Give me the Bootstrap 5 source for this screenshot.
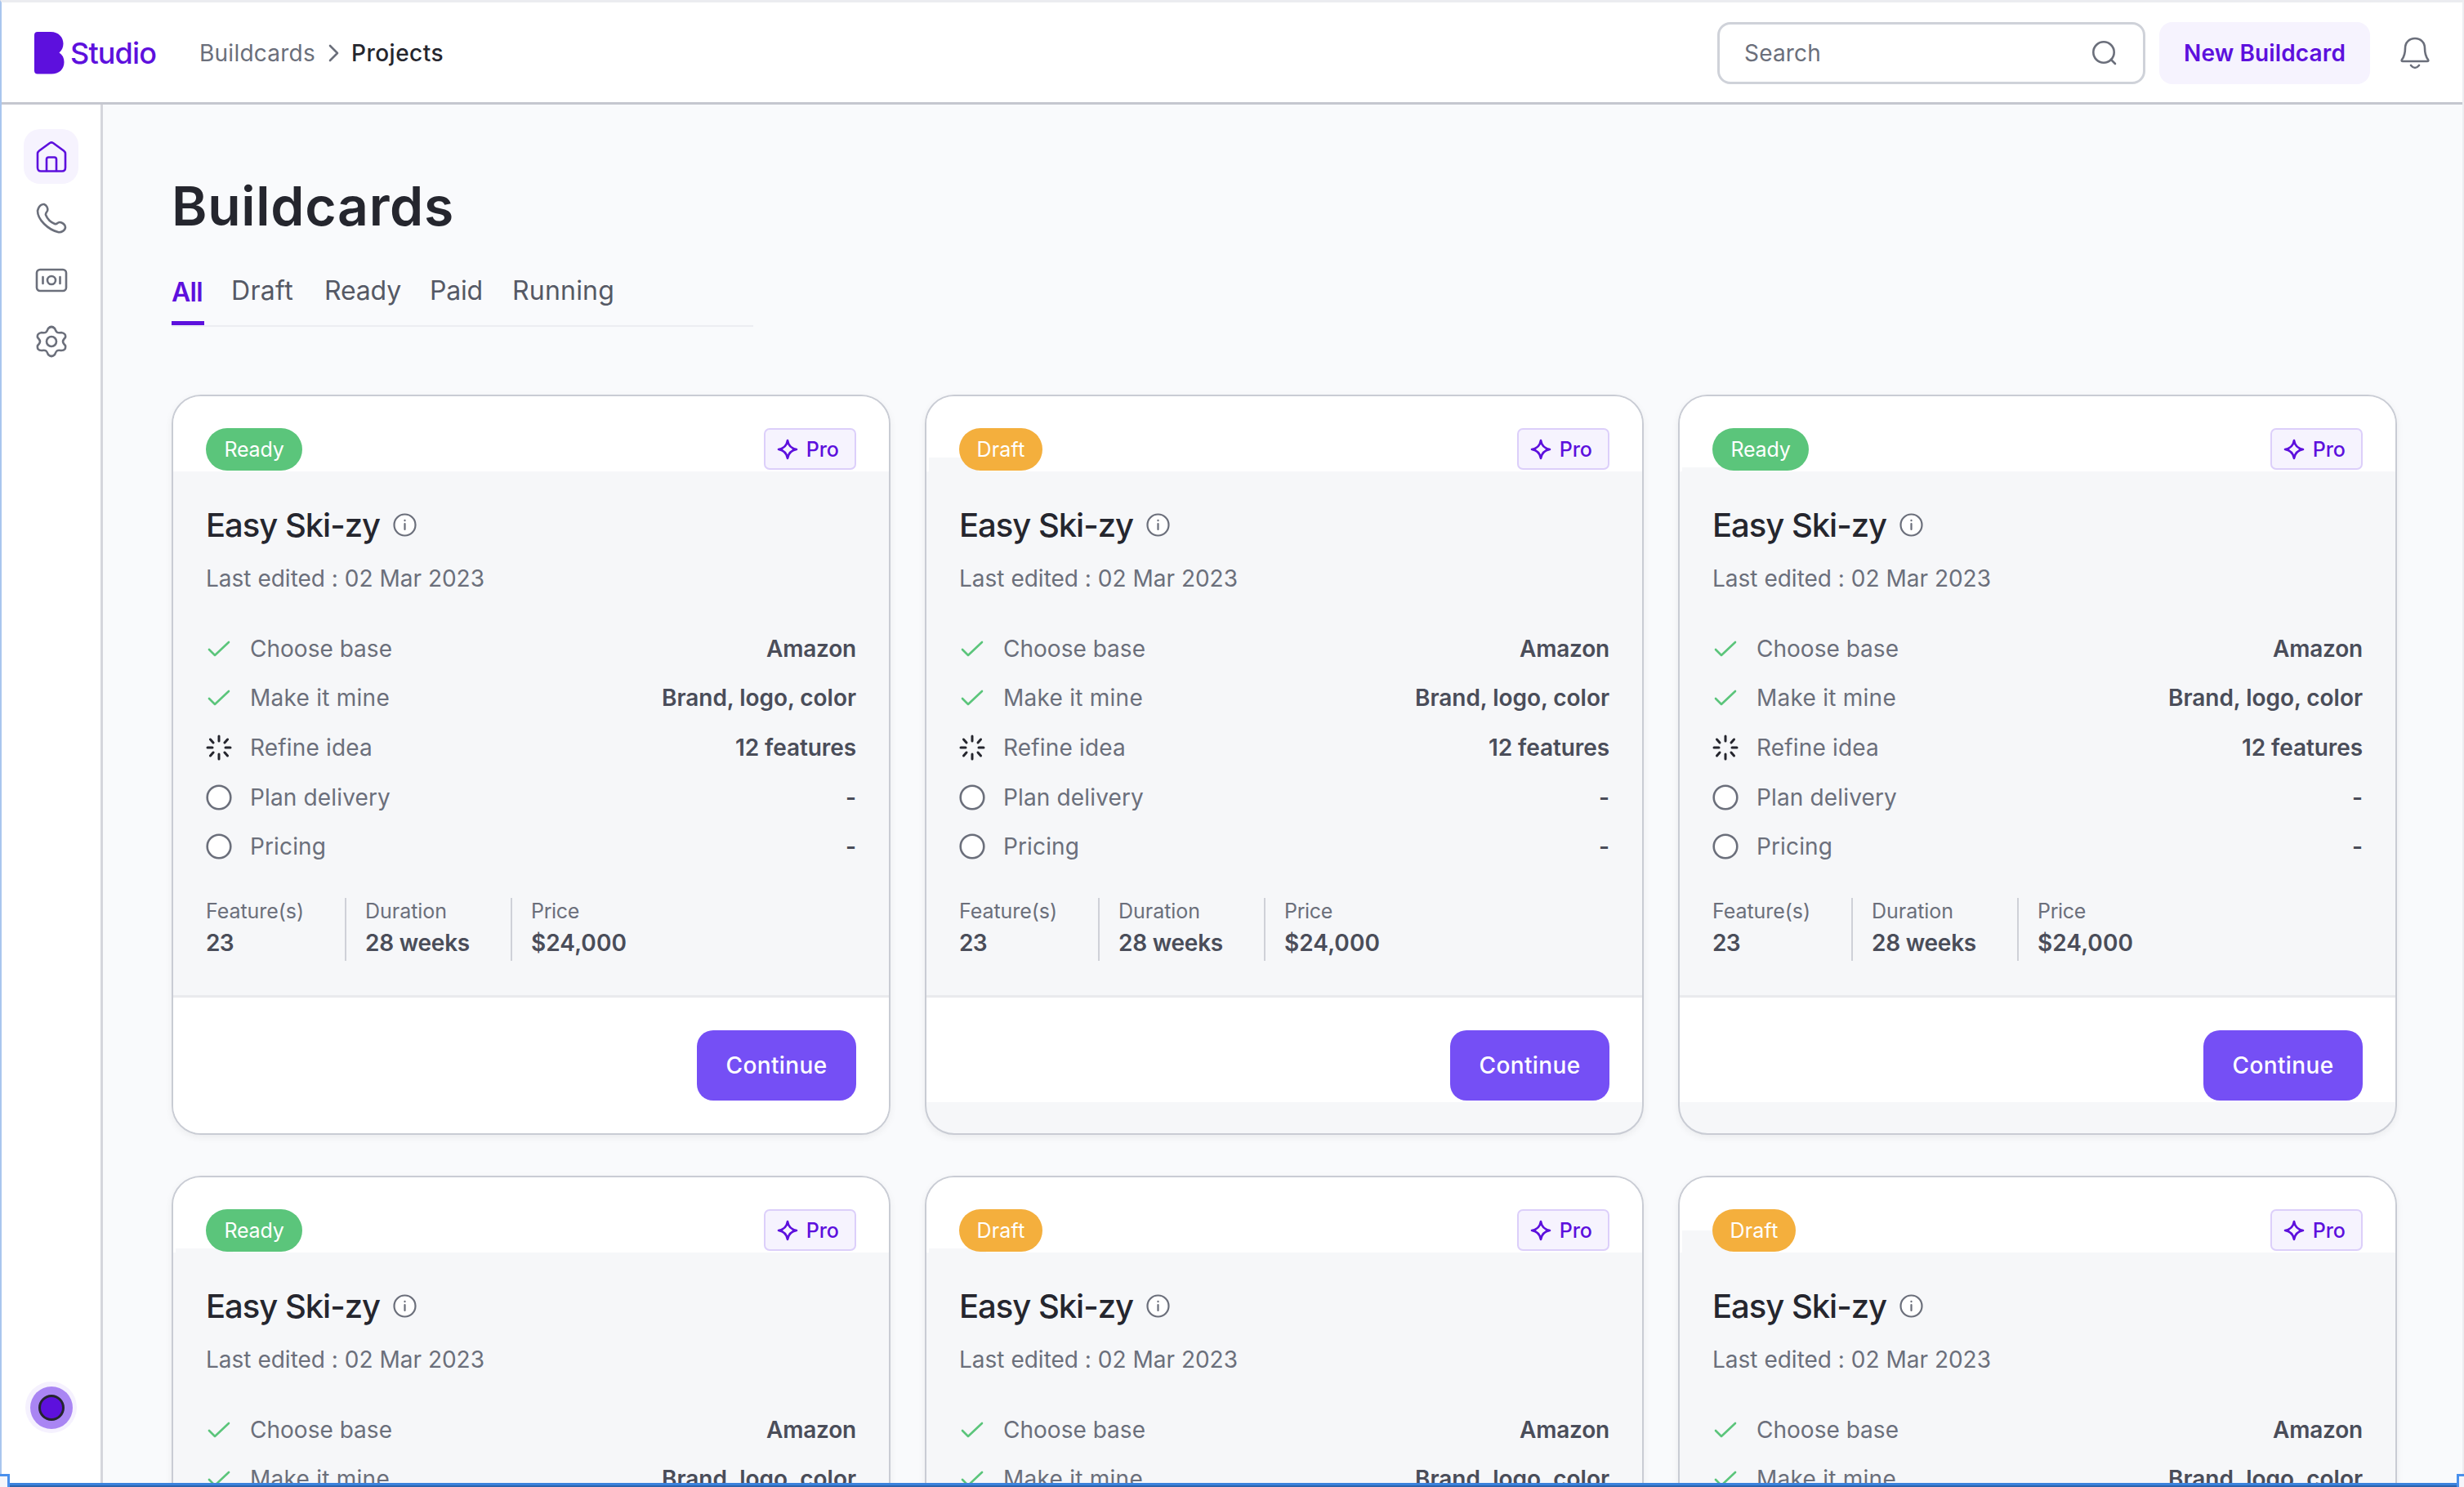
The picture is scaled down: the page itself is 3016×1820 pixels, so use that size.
<!DOCTYPE html>
<html lang="en">
<head>
<meta charset="utf-8">
<title>Buildcards</title>
<link rel="stylesheet" href="https://cdn.jsdelivr.net/npm/bootstrap@5.3.0/dist/css/bootstrap.min.css">
<style>
html,body{height:100%}
body{font-family:Inter,"Liberation Sans",sans-serif;font-size:28px;line-height:36px;color:#6b6f7b;background:#f9fafc;overflow:hidden}
svg{display:block;flex:none;fill:none;stroke:currentColor;stroke-width:2.6;stroke-linecap:round;stroke-linejoin:round}
.shell{height:1815px;border-left:2px solid #a9c6ee;border-right:2px solid #ededf1;border-top:3px solid #ebecf0;overflow:hidden}
.topbar{height:125px;border-bottom:3px solid #c5c7cf;background:#fff;padding:2px 40px 0 40px}
.logo-text{font-size:36px;color:#5d10dd;font-weight:500}
.crumb{margin-left:53px;gap:15.5px}
.searchbox{width:524px;height:76px;border:3px solid #cfd2d9;border-radius:16px;padding:0 31px 0 30px}
.newbtn{width:258px;height:76px;border-radius:16px;background:#f6f3fe;color:#5d10dd;font-weight:600;margin-left:17px}
.side{width:124px;border-right:3px solid #d5d6dc;background:#fff;padding:30px 0 61px}
.navtile{width:67px;height:67px;border-radius:20px;margin-bottom:8.5px}
.navtile.on{background:#f6f3fe;color:#5d10dd}
.avatar-ring{width:63px;height:63px;border-radius:50%;background:#f5f1fe}
.avatar-mid{width:52px;height:52px;border-radius:50%;background:#a985f3}
.avatar-dot{width:32px;height:32px;border-radius:50%;background:#5d10dd;border:3px solid #25262e}
.main-area{padding:84px 0 0 84px;color:#6b6f7b;overflow:hidden}
.main-area h1{font-size:66px;line-height:80px;font-weight:600;color:#25262e;margin:0}
.tabline{width:712px;height:64px;border-bottom:2px solid #ecedf1;margin-top:44px;font-size:32px;line-height:40px;color:#555965}
.tabline .on{color:#5d10dd;font-weight:600;height:62px;border-bottom:5px solid #5d10dd;padding-top:2px;width:40px}
.cards{display:grid;grid-template-columns:repeat(3,880px);gap:50px 42px;margin-top:83px}
.bcard{height:906px;border:2px solid #c9ccd4;border-radius:36px;background:#f6f7f9;box-shadow:0 3px 10px #0000000f;overflow:hidden}
.chead{height:92px;background:#fff;padding:39px 40px 0}
.notch-27{background:linear-gradient(#f6f7f9,#f6f7f9) 3px 100%/60px 27px no-repeat #fff}
.notch-17{background:linear-gradient(#f6f7f9,#f6f7f9) 3px 100%/60px 17px no-repeat #fff}
.notch-5{background:linear-gradient(#f6f7f9,#f6f7f9) 3px 100%/70px 5px no-repeat #fff}
.pill{height:52px;border-radius:26px;color:#fff;font-size:25px;background:#5bc57b}
.pill.draft{background:#f4af3d}
.protag{height:51px;width:113px;border:2px solid #dccffa;border-radius:7px;background:#f6f3fe;color:#5d10dd;font-size:25px;font-weight:500;gap:9.5px;padding-right:5px}
.cbody{height:644px;border-bottom:3px solid #e9eaed;padding:41.5px 40px 0}
.cname{font-size:40px;line-height:48px;font-weight:550;color:#25262e;gap:15.5px}
.edited{margin-top:23px;margin-bottom:50px}
.step{height:36px;margin-bottom:24.7px}
.step svg{margin-right:22px}
.step b,.stat b{font-weight:600;color:#4a4d59}
.stats{margin-top:45px}
.stat{height:77px;border-left:2px solid #cfd1d8;padding-left:23px;padding-top:1px}
.stat:first-child{border:0;padding-left:0}
.stat small{font-size:25px;line-height:30px;display:block}
.stat b{display:block;line-height:36px;margin-top:6px}
.cfoot{padding:40px 40px 0}
.foot-full{height:171px;background:#fff}
.foot-short{height:128px;background:#fff}
.cont{width:195px;height:86px;border-radius:20px;background:#754ff5;color:#fff;font-weight:500}
.framebar{height:5px;background:#3b82dc;border-bottom:2px solid #2c64ad}
.handle{position:absolute;bottom:0;width:20px;height:16px;background:#f5f6fb;border:3px solid #4a90ec;border-bottom:0}
.handle.l{left:-8px}.handle.r{right:-11px}
</style>
<script src="https://cdn.jsdelivr.net/npm/bootstrap@5.3.0/dist/js/bootstrap.bundle.min.js"></script>
</head>
<body>
<div class="shell d-flex flex-column">
 <header class="topbar d-flex align-items-center flex-shrink-0">
  <svg width="37" height="52" viewBox="0 0 37 52"><path fill="#5d10dd" stroke="none" d="M4 0H20C30 0 35.500 7 35.500 14.500C35.500 19 33.500 23 30.500 25.500C34.500 28 36.500 32 36.500 37C36.500 46 30 51.500 21 51.500H4Q0 51.500 0 47.500V4Q0 0 4 0Z"/></svg>
  <span class="logo-text" data-w="105" style="margin-left:7px">Studio</span>
  <nav class="crumb d-flex align-items-center"><span data-w="142">Buildcards</span>
   <svg width="13" height="22" viewBox="0 0 13 22"><path d="M2 2L11 11L2 20"/></svg>
   <span data-w="113" style="color:#25262e;font-weight:500">Projects</span></nav>
  <div class="searchbox d-flex align-items-center justify-content-between ms-auto"><span data-w="94">Search</span>
   <svg width="32" height="32" viewBox="0 0 32 32"><circle cx="15" cy="15" r="12.7"/><path d="M24 24L29 29"/></svg></div>
  <button class="newbtn btn border-0 p-0" style="font-size:28px"><span data-w="198">New Buildcard</span></button>
  <svg width="36" height="40" viewBox="0 0 36 40" style="margin-left:37px"><path d="M2 28C5 24 6 20 6 14C6 7 11 2 18 2S30 7 30 14C30 20 31 24 34 28Q35 30 33 30H3Q1 30 2 28Z"/><path d="M13 35Q18 41 23 35"/></svg>
 </header>
 <div class="d-flex flex-grow-1" style="min-height:0">
  <aside class="side d-flex flex-column align-items-center flex-shrink-0">
   <div class="navtile on d-flex align-items-center justify-content-center"><svg width="38" height="38" viewBox="0 0 38 38"><path d="M2 15Q2 13 4 11.500L17 2Q19 .8 21 2L34 11.500Q36 13 36 15V32Q36 36.500 32 36.500H6Q2 36.500 2 32Z"/><path d="M13 36V22Q13 19.500 15.500 19.500H22.500Q25 19.500 25 22V36"/></svg></div>
   <div class="navtile d-flex align-items-center justify-content-center"><svg width="38" height="38" viewBox="0 0 38 38"><path d="M3 7C4 4 7 1.500 10 2C13 3 15 7 14 10C13 12 11.500 13 12 15C14 20 18 24 23 26C26 27 26 24 29 24C32 24 36 27 36 30C36 34 31 37 27 36C15 33 2 21 2 10Z"/></svg></div>
   <div class="navtile d-flex align-items-center justify-content-center"><svg width="40" height="30" viewBox="0 0 40 30"><rect x="2" y="2" width="36" height="26" rx="4"/><circle cx="20" cy="15" r="5"/><path d="M9.500 11V19M30.500 11V19"/></svg></div>
   <div class="navtile d-flex align-items-center justify-content-center"><svg width="38" height="40" viewBox="0 0 38 40"><path d="M15 4Q19 0 23 4C25 9 26 10 31 9Q37 10 36 15C32 19 32 21 36 25Q37 31 31 31C26 30 25 31 23 36Q19 40 15 36C13 31 12 30 7 31Q1 31 2 25C6 21 6 19 2 15Q1 10 7 9C12 10 13 9 15 4Z"/><circle cx="19" cy="20" r="6"/></svg></div>
   <div class="avatar-ring d-flex align-items-center justify-content-center mt-auto"><div class="avatar-mid d-flex align-items-center justify-content-center"><div class="avatar-dot"></div></div></div>
  </aside>
  <main class="main-area flex-grow-1">
   <h1><span data-w="346">Buildcards</span></h1>
   <div class="tabline d-flex"><span class="on"><span data-w="38">All</span></span><span data-w="76" style="margin-left:33px">Draft</span><span data-w="94" style="margin-left:38px">Ready</span><span data-w="65" style="margin-left:35px">Paid</span><span data-w="125" style="margin-left:36px">Running</span></div>
   <div class="cards" id="cards"></div>
  </main>
 </div>
</div>
<div class="framebar"></div><i class="handle l"></i><i class="handle r"></i>
<script>
const check='<svg width="32" height="32" viewBox="0 0 32 32" style="color:#5bc57b"><path d="M4 17L11 24L28 8"/></svg>';
const ring='<svg width="32" height="32" viewBox="0 0 32 32"><circle cx="16" cy="16" r="14.300" fill="#fff"/></svg>';
const spin='<svg width="32" height="32" viewBox="0 0 32 32" style="color:#25262e;stroke-width:3"><path d="M16 2V8M16 24V30M2 16H8M24 16H30M5.500 6L9 10M23 22L26.500 26M5.500 26L9 22M23 10L26.500 6"/></svg>';
const steps=[[check,'Choose base',174,'Amazon',110],[check,'Make it mine',171,'Brand, logo, color',238],[spin,'Refine idea',150,'12 features',148],[ring,'Plan delivery',172,'-',11],[ring,'Pricing',93,'-',11]];
const data=[['Ready','','foot-full'],['Draft','notch-17','foot-short'],['Ready','notch-5','foot-short'],['Ready','notch-5','foot-full'],['Draft','notch-5','foot-short'],['Draft','notch-27','foot-short']];
document.getElementById('cards').innerHTML=data.map(([s,n,f])=>`<article class="bcard">
<div class="chead ${n} d-flex justify-content-between align-items-start"><span class="pill ${s=='Draft'?'draft':''} d-flex align-items-center justify-content-center" style="width:${s=='Draft'?102:118}px"><span data-w="${s=='Draft'?59:73}">${s}</span></span>
<span class="protag d-flex align-items-center justify-content-center"><svg width="26" height="26" viewBox="0 0 26 26"><path d="M13 2Q14.500 11.500 24 13Q14.500 14.500 13 24Q11.500 14.500 2 13Q11.500 11.500 13 2Z"/></svg><span data-w="40">Pro</span></span></div>
<div class="cbody"><div class="cname d-flex align-items-center"><span data-w="213">Easy Ski-zy</span><svg width="29" height="29" viewBox="0 0 29 29" style="color:#6b6f7b;stroke-width:2.2"><circle cx="14.500" cy="14.500" r="13" fill="#fff"/><path d="M14.500 13V20M14.500 8.800V9.200"/></svg></div>
<div class="edited"><span data-w="341">Last edited : 02 Mar 2023</span></div>
${steps.map(r=>`<div class="step d-flex align-items-center">${r[0]}<span data-w="${r[2]}">${r[1]}</span><b class="ms-auto" data-w="${r[4]}">${r[3]}</b></div>`).join('')}
<div class="stats d-flex"><div class="stat" style="width:170px"><small><span data-w="120">Feature(s)</span></small><b><span data-w="34">23</span></b></div><div class="stat" style="width:203px"><small><span data-w="100">Duration</span></small><b><span data-w="128">28 weeks</span></b></div><div class="stat"><small><span data-w="59">Price</span></small><b><span data-w="117">$24,000</span></b></div></div></div>
<div class="cfoot ${f} d-flex justify-content-end align-items-start"><button class="cont btn border-0 p-0" style="font-size:28px"><span data-w="124">Continue</span></button></div>
</article>`).join('');
/* Track each label so that it fills its intended measure */
document.fonts.ready.then(()=>document.querySelectorAll('[data-w]').forEach(e=>{
 e.style.whiteSpace='nowrap';
 const w=e.getBoundingClientRect().width,n=e.textContent.length;
 if(n>1)e.style.letterSpacing=((+e.dataset.w-w)/n)+'px';
}));
</script>
</body>
</html>
